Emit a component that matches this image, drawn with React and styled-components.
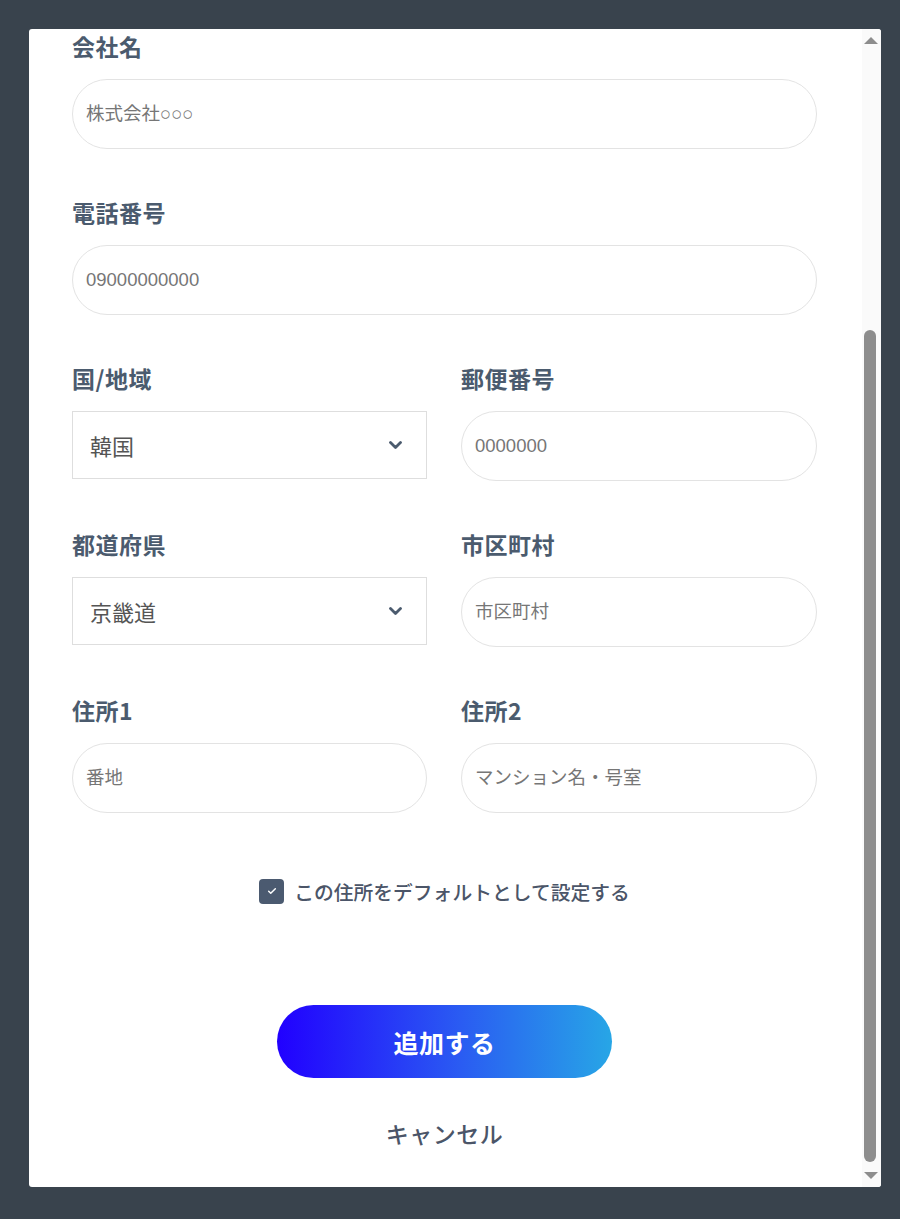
import React from "react";
import styled, { createGlobalStyle } from "styled-components";

const GlobalStyle = createGlobalStyle`
  html, body { margin: 0; padding: 0; background: #39434d; }
  * { box-sizing: border-box; }
`;

const Overlay = styled.div`
  min-height: 1219px;
  padding: 29px 0 0 29px;
  background: #39434d;
  font-family: "Noto Sans CJK JP", "Noto Sans", sans-serif;
`;

const Modal = styled.div`
  width: 852px;
  height: 1158px;
  background: #ffffff;
  border-radius: 3px;
  overflow: hidden;
  display: flex;
`;

const Content = styled.div`
  flex: 1;
  min-width: 0;
  padding: 1px 45px 38px 43px;
  display: flex;
  flex-direction: column;
`;

const ScrollBar = styled.div`
  width: 19px;
  flex-shrink: 0;
  background: #fafafa;
  display: flex;
  flex-direction: column;
`;

const ArrowButton = styled.div`
  height: 18px;
  flex-shrink: 0;
  display: flex;
  justify-content: center;
  align-items: ${(p) => (p.$down ? "flex-start" : "flex-end")};
  padding: ${(p) => (p.$down ? "3px 2px 0 0" : "0 2px 3px 0")};
`;

const Track = styled.div`
  flex: 1;
  display: flex;
  flex-direction: column;
  padding: ${(p) => p.$offset}px 5px 7px 2px;
`;

const Thumb = styled.div`
  flex: 1;
  background: #8d8d8d;
  border-radius: 7px;
`;

const Fields = styled.div`
  display: flex;
  flex-direction: column;
  gap: 47px;
`;

const Row = styled.div`
  display: grid;
  grid-template-columns: ${(p) => (p.$split ? "355px 1fr" : "1fr")};
  column-gap: 34px;
`;

const Field = styled.div`
  display: flex;
  flex-direction: column;
`;

const Label = styled.label`
  font-size: 23px;
  line-height: 32px;
  font-weight: 700;
  letter-spacing: 0.5px;
  color: #4b5b6e;
  margin-bottom: 17px;
`;

const Input = styled.input`
  height: 70px;
  width: 100%;
  border: 1px solid #e3e3e3;
  border-radius: 35px;
  padding: 0 13px;
  font-family: "Liberation Sans", "Noto Sans CJK JP", sans-serif;
  font-size: 18.5px;
  color: #333;
  background: #fff;
  outline: none;
  &::placeholder { color: #767676; }
`;

const SelectBox = styled.div`
  height: 68px;
  border: 1px solid #dedede;
  display: flex;
  align-items: center;
  justify-content: space-between;
  padding: 0 24px 0 17px;
  font-size: 22px;
  color: #555;
  background: #fff;
`;

const Chevron = styled.svg`
  width: 13px;
  height: 8px;
  margin-top: -1px;
  color: #4b5b6e;
`;

const CheckRow = styled.div`
  margin-top: 63px;
  height: 30px;
  display: flex;
  align-items: center;
  justify-content: center;
  gap: 10px;
`;

const CheckBox = styled.span`
  width: 25px;
  height: 25px;
  border-radius: 4px;
  background: #4b5a70;
  display: flex;
  align-items: center;
  justify-content: center;
`;

const CheckText = styled.span`
  font-size: 19.8px;
  color: #4b5568;
  font-weight: 500;
`;

const SubmitButton = styled.button`
  margin: 99px auto 0;
  width: 335px;
  height: 73px;
  border: none;
  border-radius: 37px;
  background: linear-gradient(90deg, #2100ff 0%, #2a5cf2 55%, #27a6e6 100%);
  color: #fff;
  font-family: "Noto Sans CJK JP", sans-serif;
  font-size: 25px;
  font-weight: 700;
  letter-spacing: 0.5px;
`;

const Cancel = styled.div`
  margin-top: 39px;
  line-height: 32px;
  text-align: center;
  font-size: 23px;
  font-weight: 500;
  color: #4b5568;
  letter-spacing: 0.5px;
`;

function TextField({ label, placeholder }) {
  return (
    <Field>
      <Label>{label}</Label>
      <Input placeholder={placeholder} />
    </Field>
  );
}

function SelectField({ label, value }) {
  return (
    <Field>
      <Label>{label}</Label>
      <SelectBox>
        <span>{value}</span>
        <Chevron viewBox="0 0 13 8" fill="none" stroke="currentColor" strokeWidth="2.8" strokeLinecap="round" strokeLinejoin="round">
          <path d="M1.5 1.5l5 5 5-5" />
        </Chevron>
      </SelectBox>
    </Field>
  );
}

export default function App() {
  return (
    <>
      <GlobalStyle />
      <Overlay>
        <Modal>
          <Content>
            <Fields>
              <Row>
                <TextField label="会社名" placeholder="株式会社○○○" />
              </Row>
              <Row>
                <TextField label="電話番号" placeholder="09000000000" />
              </Row>
              <Row $split>
                <SelectField label="国/地域" value="韓国" />
                <TextField label="郵便番号" placeholder="0000000" />
              </Row>
              <Row $split>
                <SelectField label="都道府県" value="京畿道" />
                <TextField label="市区町村" placeholder="市区町村" />
              </Row>
              <Row $split>
                <TextField label="住所1" placeholder="番地" />
                <TextField label="住所2" placeholder="マンション名・号室" />
              </Row>
            </Fields>
            <CheckRow>
              <CheckBox>
                <svg width="10" height="10" viewBox="0 0 24 24" fill="none" stroke="#fff" strokeWidth="3.5" strokeLinecap="round" strokeLinejoin="round">
                  <path d="M4 12.5l5 5L20 6.5" />
                </svg>
              </CheckBox>
              <CheckText>この住所をデフォルトとして設定する</CheckText>
            </CheckRow>
            <SubmitButton type="button">追加する</SubmitButton>
            <Cancel>キャンセル</Cancel>
          </Content>
          <ScrollBar>
            <ArrowButton>
              <svg width="14" height="7" viewBox="0 0 14 7">
                <polygon points="7,0 14,7 0,7" fill="#8d8d8d" />
              </svg>
            </ArrowButton>
            <Track $offset={283}>
              <Thumb />
            </Track>
            <ArrowButton $down>
              <svg width="14" height="7" viewBox="0 0 14 7">
                <polygon points="0,0 14,0 7,7" fill="#8d8d8d" />
              </svg>
            </ArrowButton>
          </ScrollBar>
        </Modal>
      </Overlay>
    </>
  );
}
